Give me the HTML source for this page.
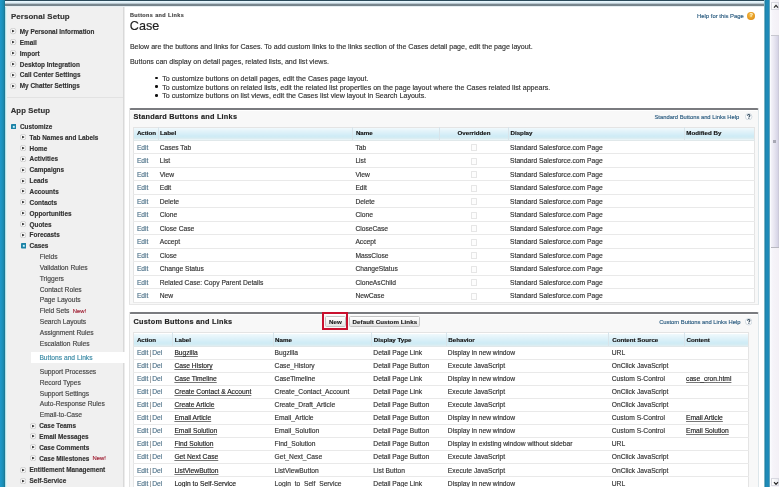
<!DOCTYPE html>
<html><head><meta charset="utf-8">
<style>
*{margin:0;padding:0;box-sizing:border-box}
html,body{width:779px;height:487px;overflow:hidden;background:#fff;font-family:"Liberation Sans", sans-serif;color:#333}
.abs{position:absolute}
#lbar{position:absolute;left:0;top:0;width:5px;height:487px;background:linear-gradient(90deg,#1f98cb 0,#1c93c0 35%,#1a8aae 70%,#1e6f8a 100%)}
#lwhite{position:absolute;left:5px;top:0;width:2px;height:487px;background:linear-gradient(90deg,#9fd6e0,#f2ffff)}
#side{position:absolute;left:7px;top:7px;width:117px;height:480px;background:#f0f0f0;border-right:1px solid #d9d9d9}
#sideshadow{position:absolute;left:124px;top:6px;width:1px;height:481px;background:#ececec}
#topbar{position:absolute;left:5px;top:0;width:760.5px;height:6.5px;background:linear-gradient(180deg,#2b4a5a 0,#2b4a5a 0.8px,#e8f8ff 1.3px,#d8e8f0 3.2px,#7a8890 4.1px,#76848c 5.7px,#e6eef2 6.5px)}
#rbar{position:absolute;left:764.1px;top:0;width:6px;height:487px;background:linear-gradient(90deg,#d9f3fa 0,#1d7590 1px,#1e8ab8 1.8px,#1e8ab8 4.6px,#1d7a98 5.2px,#cfeaf5 6px)}
#scroll{position:absolute;left:770.3px;top:0;width:8.7px;height:487px;background:linear-gradient(90deg,#fbfdff 0,#f6f4f9 30%,#f3f0f6 100%)}
#thumb{position:absolute;left:771px;top:35px;width:8px;height:213px;background:linear-gradient(90deg,#f4f3f9 0,#e6e4f0 45%,#d6d4e6 85%,#c6c4d2 100%);border-top:0.7px solid #c8c8d0;border-bottom:0.7px solid #b8b8c0}
#grip{position:absolute;left:773.3px;top:139.6px;width:3.2px;height:3.6px;background:repeating-linear-gradient(180deg,#a8a8b4 0,#a8a8b4 0.6px,#eeeef4 0.6px,#eeeef4 1.2px)}
.arr{position:absolute;left:771px;width:8px;height:8.2px;background:linear-gradient(90deg,#fdfdfd,#ececf2);border:0.6px solid #d8d8e0}
.arr svg{position:absolute;left:0.9px;top:1.6px}
.si{position:absolute;height:12px;line-height:12px;white-space:nowrap}
.sb{font-weight:bold;font-size:6.4px;color:#333}
.sr{font-size:6.7px;color:#444}
.ss{font-size:6.7px;color:#3a8aa6}
.new{color:#a02034;font-size:5.9px;margin-left:3.2px;position:relative;top:-0.6px;font-weight:normal}
.ico{position:absolute}
.ico2{position:absolute;width:5.4px;height:5.4px;background:#1b7c9c;border-radius:0.8px}
.ico2:after{content:"";position:absolute;left:1.7px;top:1.7px;width:2px;height:2px;background:#aef0ff}
#selbox{position:absolute;left:30.6px;top:352px;width:95px;height:11px;background:#fff}
.h2{position:absolute;font-weight:bold;font-size:7.9px;color:#333;white-space:nowrap;letter-spacing:0.1px}
#sep{position:absolute;left:7px;top:96.5px;width:116px;height:1px;background:#e2e2e2}
.t{position:absolute;white-space:nowrap;font-size:7.08px;color:#333}
.blk{position:absolute;background:#f8f8f8;border-top:2px solid #7a7b7f;border-left:1px solid #e4e4e4;border-right:1px solid #dde6ea;border-bottom:1px solid #e8e8e8;border-radius:2px 2px 0 0}
.btitle{position:absolute;font-weight:bold;font-size:7.3px;color:#222;white-space:nowrap;letter-spacing:0.25px}
.help{position:absolute;font-size:5.8px;color:#2c5d80;white-space:nowrap}
.q{position:absolute}
table.lt{position:absolute;border-collapse:collapse;table-layout:fixed;background:#fff;border:0.7px solid #e4e4e4}
table.lt th{font-size:6.2px;font-weight:bold;color:#111;text-align:left;padding:0 0 2px 1.3px;white-space:nowrap;overflow:hidden;background:linear-gradient(180deg,#f2fafd 0,#e0f2f9 35%,#cdebf5 75%,#d6ecf2 88%,#e6eff2 100%);border-left:0.7px solid #d8e4ea;border-bottom:0.7px solid #e0e8ea}
table.lt th:first-child{border-left:none}
table.cu th{box-shadow:inset 0 1px #fff}
table.lt td{font-size:6.7px;color:#333;padding:0 0 0 1.4px;white-space:nowrap;overflow:hidden;border-bottom:0.7px solid #e9e9e9;vertical-align:middle}
.lk{color:#52758c}
.bar{color:#888}
.ul{text-decoration:underline;text-decoration-color:#777;color:#222}
.cb{display:inline-block;width:5.6px;height:6.8px;border:0.7px solid #e6e6e6;background:#fdfdfd;vertical-align:middle;border-radius:0.6px}
.btn{position:absolute;height:9.8px;border:0.8px solid #c4c4c4;border-radius:1.5px;background:linear-gradient(180deg,#fff,#f0f0f0 60%,#e4e4e4);font-weight:bold;font-size:6.2px;color:#222;line-height:8.4px;text-align:center;white-space:nowrap}
#redbox{position:absolute;left:322.2px;top:312.2px;width:26px;height:17.4px;border:2px solid #c8102e}
</style></head><body>
<div id="wrap" style="position:absolute;left:0;top:0;width:779px;height:487px;will-change:transform;background:#fff;overflow:hidden;-webkit-text-stroke:0.15px">
<div id="side"></div>
<div id="sideshadow"></div>
<div id="selbox"></div>
<div id="lbar"></div>
<div id="lwhite"></div>
<div id="topbar"></div>
<div id="rbar"></div>
<div id="scroll"></div>
<div id="thumb"></div><div id="grip"></div>
<div class="arr" style="top:1.8px"><svg width="6" height="4.5" viewBox="0 0 6 4.5"><path d="M1 3.6 L3 1.4 L5 3.6" fill="none" stroke="#2a2a2a" stroke-width="1.2"/></svg></div>
<div class="arr" style="top:478px"><svg width="6" height="4.5" viewBox="0 0 6 4.5"><path d="M1 1.2 L3 3.4 L5 1.2" fill="none" stroke="#2a2a2a" stroke-width="1.2"/></svg></div>

<div class="h2" style="left:10.9px;top:10.5px;line-height:11px">Personal Setup</div>
<div id="sep"></div>
<div class="h2" style="left:10.7px;top:105.2px;line-height:11px;font-size:7.7px">App Setup</div>
<svg class="ico" style="left:10.40px;top:28.40px" width="6.2" height="6.2" viewBox="0 0 12 12"><rect x="0.8" y="0.8" width="10.4" height="10.4" rx="4" fill="#fafafa" stroke="#b8b8b8" stroke-width="1.1"/><path d="M4.3 3.2 L8.9 6 L4.3 8.8 Z" fill="#111"/></svg><div class="si sb" style="left:19.8px;top:26.00px">My Personal Information</div><svg class="ico" style="left:10.40px;top:39.25px" width="6.2" height="6.2" viewBox="0 0 12 12"><rect x="0.8" y="0.8" width="10.4" height="10.4" rx="4" fill="#fafafa" stroke="#b8b8b8" stroke-width="1.1"/><path d="M4.3 3.2 L8.9 6 L4.3 8.8 Z" fill="#111"/></svg><div class="si sb" style="left:19.8px;top:36.85px">Email</div><svg class="ico" style="left:10.40px;top:50.10px" width="6.2" height="6.2" viewBox="0 0 12 12"><rect x="0.8" y="0.8" width="10.4" height="10.4" rx="4" fill="#fafafa" stroke="#b8b8b8" stroke-width="1.1"/><path d="M4.3 3.2 L8.9 6 L4.3 8.8 Z" fill="#111"/></svg><div class="si sb" style="left:19.8px;top:47.70px">Import</div><svg class="ico" style="left:10.40px;top:60.95px" width="6.2" height="6.2" viewBox="0 0 12 12"><rect x="0.8" y="0.8" width="10.4" height="10.4" rx="4" fill="#fafafa" stroke="#b8b8b8" stroke-width="1.1"/><path d="M4.3 3.2 L8.9 6 L4.3 8.8 Z" fill="#111"/></svg><div class="si sb" style="left:19.8px;top:58.55px">Desktop Integration</div><svg class="ico" style="left:10.40px;top:71.80px" width="6.2" height="6.2" viewBox="0 0 12 12"><rect x="0.8" y="0.8" width="10.4" height="10.4" rx="4" fill="#fafafa" stroke="#b8b8b8" stroke-width="1.1"/><path d="M4.3 3.2 L8.9 6 L4.3 8.8 Z" fill="#111"/></svg><div class="si sb" style="left:19.8px;top:69.40px">Call Center Settings</div><svg class="ico" style="left:10.40px;top:82.65px" width="6.2" height="6.2" viewBox="0 0 12 12"><rect x="0.8" y="0.8" width="10.4" height="10.4" rx="4" fill="#fafafa" stroke="#b8b8b8" stroke-width="1.1"/><path d="M4.3 3.2 L8.9 6 L4.3 8.8 Z" fill="#111"/></svg><div class="si sb" style="left:19.8px;top:80.25px">My Chatter Settings</div><svg class="ico" style="left:10.80px;top:123.70px" width="5.6" height="5.6" viewBox="0 0 10 10"><rect x="0" y="0" width="10" height="10" rx="1.4" fill="#1b82a6"/><rect x="3.3" y="3.3" width="3.4" height="3.4" fill="#c9f5ff"/></svg><div class="si sb" style="left:20.0px;top:120.70px">Customize</div><svg class="ico" style="left:19.60px;top:134.10px" width="6.2" height="6.2" viewBox="0 0 12 12"><rect x="0.8" y="0.8" width="10.4" height="10.4" rx="4" fill="#fafafa" stroke="#b8b8b8" stroke-width="1.1"/><path d="M4.3 3.2 L8.9 6 L4.3 8.8 Z" fill="#111"/></svg><div class="si sb" style="left:29.6px;top:131.70px">Tab Names and Labels</div><svg class="ico" style="left:19.60px;top:144.95px" width="6.2" height="6.2" viewBox="0 0 12 12"><rect x="0.8" y="0.8" width="10.4" height="10.4" rx="4" fill="#fafafa" stroke="#b8b8b8" stroke-width="1.1"/><path d="M4.3 3.2 L8.9 6 L4.3 8.8 Z" fill="#111"/></svg><div class="si sb" style="left:29.6px;top:142.55px">Home</div><svg class="ico" style="left:19.60px;top:155.80px" width="6.2" height="6.2" viewBox="0 0 12 12"><rect x="0.8" y="0.8" width="10.4" height="10.4" rx="4" fill="#fafafa" stroke="#b8b8b8" stroke-width="1.1"/><path d="M4.3 3.2 L8.9 6 L4.3 8.8 Z" fill="#111"/></svg><div class="si sb" style="left:29.6px;top:153.40px">Activities</div><svg class="ico" style="left:19.60px;top:166.65px" width="6.2" height="6.2" viewBox="0 0 12 12"><rect x="0.8" y="0.8" width="10.4" height="10.4" rx="4" fill="#fafafa" stroke="#b8b8b8" stroke-width="1.1"/><path d="M4.3 3.2 L8.9 6 L4.3 8.8 Z" fill="#111"/></svg><div class="si sb" style="left:29.6px;top:164.25px">Campaigns</div><svg class="ico" style="left:19.60px;top:177.50px" width="6.2" height="6.2" viewBox="0 0 12 12"><rect x="0.8" y="0.8" width="10.4" height="10.4" rx="4" fill="#fafafa" stroke="#b8b8b8" stroke-width="1.1"/><path d="M4.3 3.2 L8.9 6 L4.3 8.8 Z" fill="#111"/></svg><div class="si sb" style="left:29.6px;top:175.10px">Leads</div><svg class="ico" style="left:19.60px;top:188.35px" width="6.2" height="6.2" viewBox="0 0 12 12"><rect x="0.8" y="0.8" width="10.4" height="10.4" rx="4" fill="#fafafa" stroke="#b8b8b8" stroke-width="1.1"/><path d="M4.3 3.2 L8.9 6 L4.3 8.8 Z" fill="#111"/></svg><div class="si sb" style="left:29.6px;top:185.95px">Accounts</div><svg class="ico" style="left:19.60px;top:199.20px" width="6.2" height="6.2" viewBox="0 0 12 12"><rect x="0.8" y="0.8" width="10.4" height="10.4" rx="4" fill="#fafafa" stroke="#b8b8b8" stroke-width="1.1"/><path d="M4.3 3.2 L8.9 6 L4.3 8.8 Z" fill="#111"/></svg><div class="si sb" style="left:29.6px;top:196.80px">Contacts</div><svg class="ico" style="left:19.60px;top:210.05px" width="6.2" height="6.2" viewBox="0 0 12 12"><rect x="0.8" y="0.8" width="10.4" height="10.4" rx="4" fill="#fafafa" stroke="#b8b8b8" stroke-width="1.1"/><path d="M4.3 3.2 L8.9 6 L4.3 8.8 Z" fill="#111"/></svg><div class="si sb" style="left:29.6px;top:207.65px">Opportunities</div><svg class="ico" style="left:19.60px;top:220.90px" width="6.2" height="6.2" viewBox="0 0 12 12"><rect x="0.8" y="0.8" width="10.4" height="10.4" rx="4" fill="#fafafa" stroke="#b8b8b8" stroke-width="1.1"/><path d="M4.3 3.2 L8.9 6 L4.3 8.8 Z" fill="#111"/></svg><div class="si sb" style="left:29.6px;top:218.50px">Quotes</div><svg class="ico" style="left:19.60px;top:231.75px" width="6.2" height="6.2" viewBox="0 0 12 12"><rect x="0.8" y="0.8" width="10.4" height="10.4" rx="4" fill="#fafafa" stroke="#b8b8b8" stroke-width="1.1"/><path d="M4.3 3.2 L8.9 6 L4.3 8.8 Z" fill="#111"/></svg><div class="si sb" style="left:29.6px;top:229.35px">Forecasts</div><svg class="ico" style="left:20.60px;top:243.10px" width="5.6" height="5.6" viewBox="0 0 10 10"><rect x="0" y="0" width="10" height="10" rx="1.4" fill="#1b82a6"/><rect x="3.3" y="3.3" width="3.4" height="3.4" fill="#c9f5ff"/></svg><div class="si sb" style="left:29.6px;top:240.10px">Cases</div><div class="si sr" style="left:39.7px;top:251.00px">Fields</div><div class="si sr" style="left:39.7px;top:261.85px">Validation Rules</div><div class="si sr" style="left:39.7px;top:272.70px">Triggers</div><div class="si sr" style="left:39.7px;top:283.55px">Contact Roles</div><div class="si sr" style="left:39.7px;top:294.40px">Page Layouts</div><div class="si sr" style="left:39.7px;top:305.25px">Field Sets<span class="new">New!</span></div><div class="si sr" style="left:39.7px;top:316.10px">Search Layouts</div><div class="si sr" style="left:39.7px;top:326.95px">Assignment Rules</div><div class="si sr" style="left:39.7px;top:337.80px">Escalation Rules</div><div class="si ss" style="left:39.4px;top:352.00px">Buttons and Links</div><div class="si sr" style="left:39.7px;top:365.90px">Support Processes</div><div class="si sr" style="left:39.7px;top:376.75px">Record Types</div><div class="si sr" style="left:39.7px;top:387.60px">Support Settings</div><div class="si sr" style="left:39.7px;top:398.45px">Auto-Response Rules</div><div class="si sr" style="left:39.7px;top:409.30px">Email-to-Case</div><svg class="ico" style="left:30.10px;top:422.50px" width="6.2" height="6.2" viewBox="0 0 12 12"><rect x="0.8" y="0.8" width="10.4" height="10.4" rx="4" fill="#fafafa" stroke="#b8b8b8" stroke-width="1.1"/><path d="M4.3 3.2 L8.9 6 L4.3 8.8 Z" fill="#111"/></svg><div class="si sb" style="left:39.2px;top:420.10px">Case Teams</div><svg class="ico" style="left:30.10px;top:433.35px" width="6.2" height="6.2" viewBox="0 0 12 12"><rect x="0.8" y="0.8" width="10.4" height="10.4" rx="4" fill="#fafafa" stroke="#b8b8b8" stroke-width="1.1"/><path d="M4.3 3.2 L8.9 6 L4.3 8.8 Z" fill="#111"/></svg><div class="si sb" style="left:39.2px;top:430.95px">Email Messages</div><svg class="ico" style="left:30.10px;top:444.20px" width="6.2" height="6.2" viewBox="0 0 12 12"><rect x="0.8" y="0.8" width="10.4" height="10.4" rx="4" fill="#fafafa" stroke="#b8b8b8" stroke-width="1.1"/><path d="M4.3 3.2 L8.9 6 L4.3 8.8 Z" fill="#111"/></svg><div class="si sb" style="left:39.2px;top:441.80px">Case Comments</div><svg class="ico" style="left:30.10px;top:455.05px" width="6.2" height="6.2" viewBox="0 0 12 12"><rect x="0.8" y="0.8" width="10.4" height="10.4" rx="4" fill="#fafafa" stroke="#b8b8b8" stroke-width="1.1"/><path d="M4.3 3.2 L8.9 6 L4.3 8.8 Z" fill="#111"/></svg><div class="si sb" style="left:39.2px;top:452.65px">Case Milestones<span class="new">New!</span></div><svg class="ico" style="left:20.10px;top:466.50px" width="6.2" height="6.2" viewBox="0 0 12 12"><rect x="0.8" y="0.8" width="10.4" height="10.4" rx="4" fill="#fafafa" stroke="#b8b8b8" stroke-width="1.1"/><path d="M4.3 3.2 L8.9 6 L4.3 8.8 Z" fill="#111"/></svg><div class="si sb" style="left:29.6px;top:464.10px">Entitlement Management</div><svg class="ico" style="left:20.10px;top:477.50px" width="6.2" height="6.2" viewBox="0 0 12 12"><rect x="0.8" y="0.8" width="10.4" height="10.4" rx="4" fill="#fafafa" stroke="#b8b8b8" stroke-width="1.1"/><path d="M4.3 3.2 L8.9 6 L4.3 8.8 Z" fill="#111"/></svg><div class="si sb" style="left:29.6px;top:475.10px">Self-Service</div>

<div class="t" style="left:129.9px;top:9.6px;line-height:10px;font-size:5.5px;font-weight:bold;letter-spacing:0.37px;color:#444">Buttons and Links</div>
<div class="t" style="left:129.8px;top:17.6px;line-height:16px;font-size:12.6px;color:#222">Case</div>
<div class="help" style="left:697px;top:11.2px;line-height:10px;font-size:5.9px">Help for this Page</div>
<div class="abs" style="left:747.3px;top:12px;width:7.8px;height:7.8px;border-radius:50%;background:radial-gradient(circle at 45% 40%,#f6c04a,#e3951c 65%,#c97a12);"></div>
<div class="abs" style="left:749.6px;top:12.4px;font-size:5.6px;font-weight:bold;color:#fff0c8;line-height:7px">?</div>
<div class="t" style="left:129.9px;top:41.8px;line-height:10px">Below are the buttons and links for Cases. To add custom links to the links section of the Cases detail page, edit the page layout.</div>
<div class="t" style="left:129.9px;top:57.2px;line-height:10px">Buttons can display on detail pages, related lists, and list views.</div>
<div class="abs" style="left:155.1px;top:76.6px;width:2.6px;height:2.6px;border-radius:50%;background:#111"></div>
<div class="abs" style="left:155.1px;top:85.35px;width:2.6px;height:2.6px;border-radius:50%;background:#111"></div>
<div class="abs" style="left:155.1px;top:94.1px;width:2.6px;height:2.6px;border-radius:50%;background:#111"></div>
<div class="t" style="left:162.3px;top:73.8px;line-height:10px;font-size:7.08px">To customize buttons on detail pages, edit the Cases page layout.</div>
<div class="t" style="left:162.3px;top:82.55px;line-height:10px;font-size:7.08px">To customize buttons on related lists, edit the related list properties on the page layout where the Cases related list appears.</div>
<div class="t" style="left:162.3px;top:91.3px;line-height:10px;font-size:7.08px">To customize buttons on list views, edit the Cases list view layout in Search Layouts.</div>

<div class="blk" style="left:129.2px;top:107.8px;width:630px;height:197px"></div><div class="abs" style="left:130.2px;top:109.8px;width:627px;height:1px;background:#fff"></div>
<div class="btitle" style="left:133.4px;top:112.2px;line-height:10px">Standard Buttons and Links</div>
<div class="help" style="left:654.5px;top:111.7px;line-height:10px">Standard Buttons and Links Help</div>
<svg class="q" style="left:745.2px;top:112.8px" width="7.4" height="7.4" viewBox="0 0 8 8"><circle cx="4" cy="4" r="3.5" fill="#fdfeff" stroke="#bcc8d2" stroke-width="0.7"/><path d="M2.75 3.05 C2.75 2.1 3.4 1.7 4.05 1.7 C4.8 1.7 5.3 2.2 5.3 2.85 C5.3 3.7 4.2 3.8 4.2 4.75" fill="none" stroke="#2e4558" stroke-width="1.15"/><circle cx="4.2" cy="5.95" r="0.62" fill="#2e4558"/></svg>
<table class="lt" style="left:133.2px;top:126.8px;width:621.10px"><colgroup><col style="width:24.60px"><col style="width:194.50px"><col style="width:86.50px"><col style="width:69.40px"><col style="width:175.80px"><col style="width:70.30px"></colgroup><tr class="hd" style="height:13.2px"><th style="padding-left:2.7px;padding-bottom:2px">Action</th><th style="padding-bottom:2px">Label</th><th style="padding-left:2.6px;padding-bottom:2px">Name</th><th style="text-align:center;padding-left:0px;padding-bottom:2px">Overridden</th><th style="padding-bottom:2px">Display</th><th style="padding-bottom:2px">Modified By</th></tr><tr style="height:13.5px"><td style="padding-left:2.7px"><span class="lk">Edit</span></td><td>Cases Tab</td><td style="padding-left:2.6px">Tab</td><td style="text-align:center;padding-left:0px"><span class="cb"></span></td><td>Standard Salesforce.com Page</td><td></td></tr><tr style="height:13.5px"><td style="padding-left:2.7px"><span class="lk">Edit</span></td><td>List</td><td style="padding-left:2.6px">List</td><td style="text-align:center;padding-left:0px"><span class="cb"></span></td><td>Standard Salesforce.com Page</td><td></td></tr><tr style="height:13.5px"><td style="padding-left:2.7px"><span class="lk">Edit</span></td><td>View</td><td style="padding-left:2.6px">View</td><td style="text-align:center;padding-left:0px"><span class="cb"></span></td><td>Standard Salesforce.com Page</td><td></td></tr><tr style="height:13.5px"><td style="padding-left:2.7px"><span class="lk">Edit</span></td><td>Edit</td><td style="padding-left:2.6px">Edit</td><td style="text-align:center;padding-left:0px"><span class="cb"></span></td><td>Standard Salesforce.com Page</td><td></td></tr><tr style="height:13.5px"><td style="padding-left:2.7px"><span class="lk">Edit</span></td><td>Delete</td><td style="padding-left:2.6px">Delete</td><td style="text-align:center;padding-left:0px"><span class="cb"></span></td><td>Standard Salesforce.com Page</td><td></td></tr><tr style="height:13.5px"><td style="padding-left:2.7px"><span class="lk">Edit</span></td><td>Clone</td><td style="padding-left:2.6px">Clone</td><td style="text-align:center;padding-left:0px"><span class="cb"></span></td><td>Standard Salesforce.com Page</td><td></td></tr><tr style="height:13.5px"><td style="padding-left:2.7px"><span class="lk">Edit</span></td><td>Close Case</td><td style="padding-left:2.6px">CloseCase</td><td style="text-align:center;padding-left:0px"><span class="cb"></span></td><td>Standard Salesforce.com Page</td><td></td></tr><tr style="height:13.5px"><td style="padding-left:2.7px"><span class="lk">Edit</span></td><td>Accept</td><td style="padding-left:2.6px">Accept</td><td style="text-align:center;padding-left:0px"><span class="cb"></span></td><td>Standard Salesforce.com Page</td><td></td></tr><tr style="height:13.5px"><td style="padding-left:2.7px"><span class="lk">Edit</span></td><td>Close</td><td style="padding-left:2.6px">MassClose</td><td style="text-align:center;padding-left:0px"><span class="cb"></span></td><td>Standard Salesforce.com Page</td><td></td></tr><tr style="height:13.5px"><td style="padding-left:2.7px"><span class="lk">Edit</span></td><td>Change Status</td><td style="padding-left:2.6px">ChangeStatus</td><td style="text-align:center;padding-left:0px"><span class="cb"></span></td><td>Standard Salesforce.com Page</td><td></td></tr><tr style="height:13.5px"><td style="padding-left:2.7px"><span class="lk">Edit</span></td><td>Related Case: Copy Parent Details</td><td style="padding-left:2.6px">CloneAsChild</td><td style="text-align:center;padding-left:0px"><span class="cb"></span></td><td>Standard Salesforce.com Page</td><td></td></tr><tr style="height:13.5px"><td style="padding-left:2.7px"><span class="lk">Edit</span></td><td>New</td><td style="padding-left:2.6px">NewCase</td><td style="text-align:center;padding-left:0px"><span class="cb"></span></td><td>Standard Salesforce.com Page</td><td></td></tr></table>

<div class="blk" style="left:129.2px;top:311.5px;width:630px;height:190px"></div><div class="abs" style="left:130.2px;top:313.5px;width:627px;height:1px;background:#fff"></div>
<div class="btitle" style="left:133.5px;top:316.6px;line-height:10px">Custom Buttons and Links</div>
<div id="redbox"></div>
<div class="btn" style="left:325.1px;top:316.3px;width:20.6px;height:10.4px;line-height:9px">New</div>
<div class="btn" style="left:349.3px;top:316.3px;width:71.2px;height:10.4px;line-height:9px;letter-spacing:0.05px">Default Custom Links</div>
<div class="help" style="left:659.2px;top:317px;line-height:10px">Custom Buttons and Links Help</div>
<svg class="q" style="left:745.1px;top:318.3px" width="7.4" height="7.4" viewBox="0 0 8 8"><circle cx="4" cy="4" r="3.5" fill="#fdfeff" stroke="#bcc8d2" stroke-width="0.7"/><path d="M2.75 3.05 C2.75 2.1 3.4 1.7 4.05 1.7 C4.8 1.7 5.3 2.2 5.3 2.85 C5.3 3.7 4.2 3.8 4.2 4.75" fill="none" stroke="#2e4558" stroke-width="1.15"/><circle cx="4.2" cy="5.95" r="0.62" fill="#2e4558"/></svg>
<table class="lt cu" style="left:133.2px;top:332.2px;width:615.10px"><colgroup><col style="width:39.30px"><col style="width:100.20px"><col style="width:98.80px"><col style="width:74.50px"><col style="width:162.10px"><col style="width:76.10px"><col style="width:64.10px"></colgroup><tr class="hd" style="height:13.4px"><th style="padding-left:2.7px;padding-bottom:0px">Action</th><th style="padding-bottom:0px">Label</th><th style="padding-bottom:0px">Name</th><th style="padding-bottom:0px">Display Type</th><th style="padding-bottom:0px">Behavior</th><th style="padding-left:3.2px;padding-bottom:0px">Content Source</th><th style="padding-bottom:0px">Content</th></tr><tr style="height:13.05px"><td style="padding-left:2.7px"><span class="lk">Edit</span><span class="bar" style="margin:0 1px">|</span><span class="lk">Del</span></td><td><span class="ul">Bugzilla</span></td><td>Bugzilla</td><td>Detail Page Link</td><td>Display in new window</td><td style="padding-left:3.2px">URL</td><td></td></tr><tr style="height:13.05px"><td style="padding-left:2.7px"><span class="lk">Edit</span><span class="bar" style="margin:0 1px">|</span><span class="lk">Del</span></td><td><span class="ul">Case History</span></td><td>Case_History</td><td>Detail Page Button</td><td>Execute JavaScript</td><td style="padding-left:3.2px">OnClick JavaScript</td><td></td></tr><tr style="height:13.05px"><td style="padding-left:2.7px"><span class="lk">Edit</span><span class="bar" style="margin:0 1px">|</span><span class="lk">Del</span></td><td><span class="ul">Case Timeline</span></td><td>CaseTimeline</td><td>Detail Page Link</td><td>Display in new window</td><td style="padding-left:3.2px">Custom S-Control</td><td><span class="ul">case_cron.html</span></td></tr><tr style="height:13.05px"><td style="padding-left:2.7px"><span class="lk">Edit</span><span class="bar" style="margin:0 1px">|</span><span class="lk">Del</span></td><td><span class="ul">Create Contact &amp; Account</span></td><td>Create_Contact_Account</td><td>Detail Page Link</td><td>Execute JavaScript</td><td style="padding-left:3.2px">OnClick JavaScript</td><td></td></tr><tr style="height:13.05px"><td style="padding-left:2.7px"><span class="lk">Edit</span><span class="bar" style="margin:0 1px">|</span><span class="lk">Del</span></td><td><span class="ul">Create Article</span></td><td>Create_Draft_Article</td><td>Detail Page Button</td><td>Execute JavaScript</td><td style="padding-left:3.2px">OnClick JavaScript</td><td></td></tr><tr style="height:13.05px"><td style="padding-left:2.7px"><span class="lk">Edit</span><span class="bar" style="margin:0 1px">|</span><span class="lk">Del</span></td><td><span class="ul">Email Article</span></td><td>Email_Article</td><td>Detail Page Button</td><td>Display in new window</td><td style="padding-left:3.2px">Custom S-Control</td><td><span class="ul">Email Article</span></td></tr><tr style="height:13.05px"><td style="padding-left:2.7px"><span class="lk">Edit</span><span class="bar" style="margin:0 1px">|</span><span class="lk">Del</span></td><td><span class="ul">Email Solution</span></td><td>Email_Solution</td><td>Detail Page Button</td><td>Display in new window</td><td style="padding-left:3.2px">Custom S-Control</td><td><span class="ul">Email Solution</span></td></tr><tr style="height:13.05px"><td style="padding-left:2.7px"><span class="lk">Edit</span><span class="bar" style="margin:0 1px">|</span><span class="lk">Del</span></td><td><span class="ul">Find Solution</span></td><td>Find_Solution</td><td>Detail Page Button</td><td>Display in existing window without sidebar</td><td style="padding-left:3.2px">URL</td><td></td></tr><tr style="height:13.05px"><td style="padding-left:2.7px"><span class="lk">Edit</span><span class="bar" style="margin:0 1px">|</span><span class="lk">Del</span></td><td><span class="ul">Get Next Case</span></td><td>Get_Next_Case</td><td>Detail Page Button</td><td>Execute JavaScript</td><td style="padding-left:3.2px">OnClick JavaScript</td><td></td></tr><tr style="height:13.05px"><td style="padding-left:2.7px"><span class="lk">Edit</span><span class="bar" style="margin:0 1px">|</span><span class="lk">Del</span></td><td><span class="ul">ListViewButton</span></td><td>ListViewButton</td><td>List Button</td><td>Execute JavaScript</td><td style="padding-left:3.2px">OnClick JavaScript</td><td></td></tr><tr style="height:13.05px"><td style="padding-left:2.7px"><span class="lk">Edit</span><span class="bar" style="margin:0 1px">|</span><span class="lk">Del</span></td><td><span class="ul">Login to Self-Service</span></td><td>Login_to_Self_Service</td><td>Detail Page Link</td><td>Display in new window</td><td style="padding-left:3.2px">URL</td><td></td></tr></table>
</div>
</body></html>
